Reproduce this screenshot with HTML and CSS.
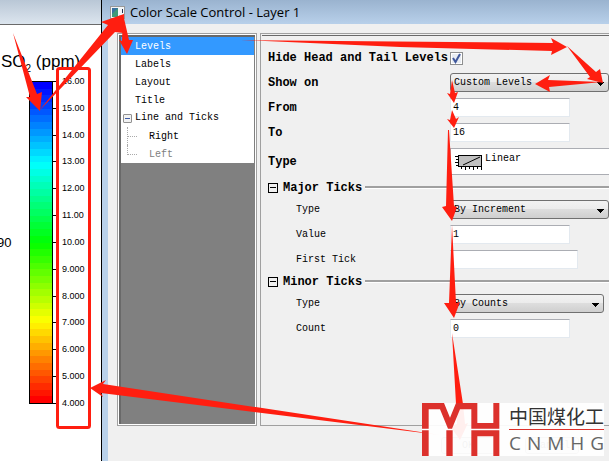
FILE: index.html
```html
<!DOCTYPE html>
<html lang="en">
<head>
<meta charset="utf-8">
<title>Color Scale Control - Layer 1</title>
<link rel="stylesheet" href="styles.css">
</head>
<body>
<section class="graph">
  <div class="graph-bar"></div>
  <div class="plot">
    <h2 class="plot-title">SO<sub>2</sub> (ppm)</h2>
    <span class="axis-label">90</span>
    <div class="scale">
      <div class="scale-bar" id="bar"></div>
      <ol class="scale-labels">
        <li>16.00</li><li>15.00</li><li>14.00</li><li>13.00</li><li>12.00</li><li>11.00</li><li>10.00</li><li>9.000</li><li>8.000</li><li>7.000</li><li>6.000</li><li>5.000</li><li>4.000</li>
      </ol>
    </div>
  </div>
</section>
<main class="dialog">
  <header class="title-bar">
    <svg class="app-icon" width="15" height="13" viewBox="0 0 15 13"><rect x=".5" y=".5" width="14" height="12" fill="#f4f6f8" stroke="#999"/><rect x="2" y="2" width="6" height="9" fill="#3f9a78"/><path d="M2 2h6l-6 6z" fill="#3a72a0"/><path d="M9 9h3v2H9z" fill="#c8d0d8"/><path d="M12 3h1v4h-1z" fill="#235"/></svg>
    <h1>Color Scale Control - Layer 1</h1>
  </header>
  <div class="content">
    <nav class="tree-frame">
      <div class="tree">
        <ul>
          <li class="selected">Levels</li>
          <li>Labels</li>
          <li>Layout</li>
          <li>Title</li>
          <li class="branch"><button class="expander" aria-label="Collapse Line and Ticks"></button>Line and Ticks</li>
          <li class="leaf">Right</li>
          <li class="leaf last">Left</li>
        </ul>
      </div>
    </nav>
    <form class="panel">
      <div class="row first"><label for="hide">Hide Head and Tail Levels</label>
        <span class="check"><input type="checkbox" id="hide" checked><svg width="13" height="13" viewBox="0 0 13 13"><path d="M3 6l2.5 4L10 2" fill="none" stroke="#40589c" stroke-width="2"/></svg></span></div>
      <div class="row"><label for="show">Show on</label><select id="show" class="wide"><option>Custom Levels</option></select></div>
      <div class="row"><label for="from">From</label><input id="from" type="text" value="4"></div>
      <div class="row"><label for="to">To</label><input id="to" type="text" value="16"></div>
      <div class="row type-row"><label for="type">Type</label>
        <button type="button" id="type" class="type-box"><svg width="28" height="18" viewBox="0 0 28 18"><rect x="3.5" y="2.5" width="23" height="11" fill="#c0c0c0" stroke="#000"/><path d="M8 12L25 4M0 3.5h3M1 6.5h2M0 9.5h3M1 12.5h2M6.5 14v2M10.5 14v3M14.5 14v2M18.5 14v3M22.5 14v2M26.5 14v3" stroke="#000" fill="none"/></svg><span>Linear</span></button></div>
      <div class="group"><button type="button" aria-label="Collapse Major Ticks"></button><h3>Major Ticks</h3></div>
      <div class="row sub"><label for="mtype">Type</label><select id="mtype" class="wide"><option>By Increment</option></select></div>
      <div class="row sub"><label for="value">Value</label><input id="value" type="text" value="1"></div>
      <div class="row sub"><label for="first">First Tick</label><input id="first" type="text" class="long"></div>
      <div class="group"><button type="button" aria-label="Collapse Minor Ticks"></button><h3>Minor Ticks</h3></div>
      <div class="row sub"><label for="ntype">Type</label><select id="ntype" class="short"><option>By Counts</option></select></div>
      <div class="row sub"><label for="count">Count</label><input id="count" type="text" value="0"></div>
    </form>
  </div>
  <footer class="actions"><button>OK</button><button>Cancel</button></footer>
</main>
<svg class="notes" width="609" height="461" viewBox="0 0 609 461" aria-hidden="true">
  <rect x="57.5" y="68.5" width="32" height="359" rx="2" fill="none" stroke="#ff1e10" stroke-width="3"/>
  <g fill="#ff1e10">
    <path d="M13 33L37 94 42 92 40 111 26 97 30 97z"/>
    <path d="M39 111L115 32 123 33 124 14 101 22 108 25z"/>
    <path d="M123 14L129 40 133 40 127 54 119 40 122 41z"/>
    <path d="M241 40L553 43 551 38 567 47 551 55 552 51 400 47z"/>
    <path d="M567 46L596 72 600 69 603 83 587 79 590 77z"/>
    <path d="M602 82L548 80 550 75 535 84 550 92 549 87z"/>
    <path d="M452 80L455 93 458 92 454 103 447 93 450 94z"/>
    <path d="M452 110L456 119 459 117 454 128 447 119 450 120z"/>
    <path d="M448 130h1L454 206 457 207 452 221 442 207 446 206z"/>
    <path d="M452 225L456 303 460 302 454 318 444 303 449 303z"/>
    <path d="M452 333L463 404 465 424 468 423 460 440 450 426 457 424 456 404z"/>
    <path d="M440 435L101 393 103 397 90 388 106 380 103 384z"/>
  </g>
</svg>
<aside class="logo">
  <svg width="78" height="53" viewBox="0 0 234 159"><path fill="#dc312c" d="M0 77V0H66L84 44 102 0H166V60H214V0H232V77H148V19H114L90 77H78L54 19H20V77zM0 82H20V159H0zM73 82H92V159H73zM148 159V82H232V159H214V100H166V159z"/></svg>
  <div class="logo-text">
    <strong>中国煤化工</strong>
    <div class="latin"><span>C</span><span>N</span><span>M</span><span>H</span><span>G</span></div>
  </div>
</aside>
<script src="script.js"></script>
</body>
</html>
```

FILE: styles.css
```css
* { box-sizing: border-box; }
body {
  margin: 0;
  min-height: 100vh;
  display: flex;
  position: relative;
  overflow: hidden;
  background: #fff;
  color: #000;
  font: 10px "Liberation Mono", monospace;
}
h1, h2, h3, ul, ol { margin: 0; padding: 0; font-weight: normal; list-style: none; }
button { padding: 0; font: inherit; color: inherit; }

/* Graph window */
.graph { flex: 0 0 102px; border-right: 1px solid #000; font-family: "Liberation Sans", sans-serif; }
.graph-bar { height: 25px; background: linear-gradient(#b9c7d6, #dce5ee); border-bottom: 1px solid #6a6a6a; }
.plot { position: relative; padding: 28px 0 0 1px; }
.plot-title { font-size: 17px; line-height: 18px; height: 28px; white-space: nowrap; }
.plot-title sub { font-size: 10px; line-height: 0; vertical-align: -5px; }
.axis-label { position: absolute; left: -3px; top: 210px; font-size: 13px; line-height: 15px; }
.scale { display: flex; padding-left: 28px; }
.scale-bar { width: 24px; height: 323px; border: 1px solid #000; display: flex; flex-direction: column; }
.scale-bar i { flex: 1; }
.scale-labels { height: 333px; margin-top: -5px; display: flex; flex-direction: column; justify-content: space-between; font-size: 9px; line-height: 11px; }
.scale-labels li { display: flex; align-items: center; gap: 4px; }
.scale-labels li::before { content: ""; width: 5px; height: 1px; background: #000; }

/* Dialog window */
.dialog { flex: 1; min-width: 0; display: flex; flex-direction: column; border-left: 6px solid #b9d1ea; background: #f0f0f0; }
.title-bar { height: 24px; margin-left: -6px; padding-left: 8px; display: flex; align-items: center; gap: 5px; background: linear-gradient(#9ab3cf, #b8d0ea); }
.title-bar h1 { font: 13px/18px "Open Sans", sans-serif; white-space: nowrap; }
.content { display: flex; gap: 3px; padding: 9px 0 0 9px; height: 402px; }
.tree-frame { flex: 0 0 140px; border: 1px solid #a0a0a0; padding: 1px; background: #fff; }
.tree { height: 100%; border: 1px solid #696969; border-width: 2px 0 0 2px; background: #808080; padding-right: 1px; }
.tree ul { background: #fff; }
.tree li { height: 18px; line-height: 20px; padding-left: 14px; white-space: pre; }
.tree .selected { background: #3399ff; color: #fff; }
.tree .branch { padding-left: 2px; display: flex; align-items: center; gap: 3px; }
.expander { width: 9px; height: 9px; border: 1px solid #919191; border-radius: 1px; background: linear-gradient(#3c5aa5, #3c5aa5) center / 5px 1px no-repeat, #f2f2f2; }
.tree .leaf { display: flex; padding-left: 6px; }
.leaf::before { content: ""; width: 9px; height: 18px; margin-right: 12px; border-left: 1px dotted #aaa; background: repeating-linear-gradient(90deg, #aaa 0 1px, transparent 1px 2px) 0 9px / 9px 1px no-repeat; }
.tree .last { color: #808080; }
.last::before { height: 10px; }

.panel { flex: 1; min-width: 0; border: 1px solid #a0a0a0; border-right: 0; padding: 12px 0 0 7px; background: linear-gradient(#696969, #696969) 1px 1px / 100% 1px no-repeat; }
.row { display: flex; align-items: center; height: 25px; }
.row label { flex: 0 0 182px; font-size: 12px; font-weight: bold; white-space: nowrap; }
.row.sub label { padding-left: 28px; font-size: 10px; font-weight: normal; }
.first { height: 24px; }
.type-row { height: 33px; }
.row input[type="text"] { width: 120px; height: 19px; padding: 0 2px; border: 1px solid #e3e9ef; border-top-color: #abadb3; background: #fff; font: 10px "Liberation Mono", monospace; }
.row input.long { width: 128px; }
.row select {
  appearance: none;
  height: 19px;
  padding: 0 3px;
  border: 1px solid #707070;
  border-radius: 3px;
  font: 10px "Liberation Mono", monospace;
  color: #000;
  background-image: linear-gradient(to bottom right, #000 50%, transparent 50%), linear-gradient(to bottom left, #000 50%, transparent 50%), linear-gradient(#f2f2f2, #ebebeb 50%, #dddddd 50%, #cfcfcf);
  background-position: right 3px top 8px, right 7px top 8px, 0 0;
  background-size: 4px 4px, 4px 4px, 100% 100%;
  background-repeat: no-repeat;
}
.row select.wide { width: 159px; }
.row select.short { width: 154px; }
.check { display: grid; }
.check > * { grid-area: 1 / 1; }
.check input { appearance: none; width: 13px; height: 13px; margin: 0; border: 1px solid #8e8f8f; background: #e8ecf2; box-shadow: inset 0 0 0 1px #fff; }
.check svg { pointer-events: none; }
.type-box { flex: 1; height: 27px; display: flex; align-items: center; padding-left: 4px; gap: 2px; border: 1px solid #abadb3; border-right: 0; background: #fff; }
.type-box span { height: 18px; }
.group { height: 19px; display: flex; align-items: center; gap: 5px; }
.group::after { content: ""; flex: 1; margin-left: -2px; height: 2px; background: #a0a0a0; border-bottom: 1px solid #fff; }
.group button { width: 10px; height: 10px; border: 1px solid #000; background: linear-gradient(#000, #000) center / 6px 1px no-repeat; }
.group h3 { font-size: 12px; font-weight: bold; }
.actions { display: flex; gap: 30px; padding: 11px 0 0 333px; }
.actions button { flex: 0 0 54px; height: 17px; border: 1px solid #a0a0a0; border-radius: 3px; background: #e4e4e4; color: #555; }

/* Annotations and watermark over both windows */
.notes { position: absolute; left: 0; top: 0; pointer-events: none; }
.logo { position: absolute; left: 422px; top: 403px; width: 182px; height: 53px; display: flex; gap: 9px; background: rgba(255, 255, 255, .93); }
.logo svg { flex: none; }
.logo-text { flex: 1; display: flex; flex-direction: column; color: #333; }
.logo-text strong { height: 27px; font: 19px/25px "Noto Sans CJK SC", sans-serif; border-bottom: 1px solid #dc312c; white-space: nowrap; }
.latin { display: flex; justify-content: space-between; font: 19px/26px "Open Sans", sans-serif; color: #666; }
```

FILE: script.js
```js
const bar = document.getElementById("bar");
const steps = 48;
for (let i = 0; i < steps; i++) {
  const band = document.createElement("i");
  band.style.background = `hsl(${240 * (1 - i / (steps - 1))} 100% 50%)`;
  bar.append(band);
}
```
